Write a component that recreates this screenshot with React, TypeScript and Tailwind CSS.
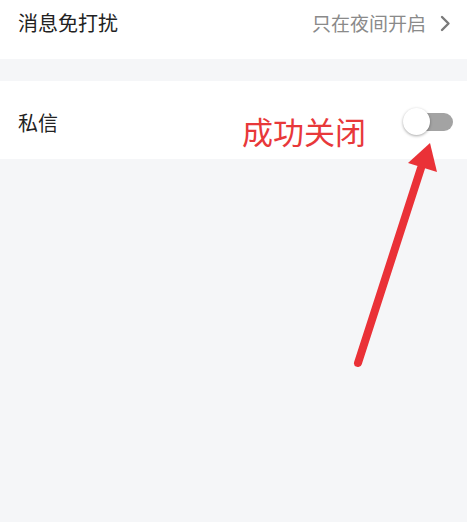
import React from "react";

function Toggle() {
    return (
        <div className="relative w-[52px] h-[28px] flex items-center">
            <div className="ml-[12px] w-[38px] h-[18px] rounded-full bg-[#a3a3a3]" />
            <div className="absolute left-0 top-0 w-[27px] h-[27px] rounded-full bg-white shadow-[0_1px_3px_rgba(0,0,0,0.35)]" />
        </div>
    );
}

export default function App() {
    return (
        <div
            className="relative w-[467px] h-[522px] bg-[#f5f6f8] overflow-hidden"
            style={{ fontFamily: '"Noto Sans CJK SC", "Noto Sans", sans-serif' }}
        >
            {/* 消息免打扰 */}
            <div className="h-[59px] bg-white flex items-center justify-between pl-[18px] pr-[16px] pb-[13px]">
                <span className="text-[20px] text-[#222]">消息免打扰</span>
                <div className="flex items-center gap-[14px]">
                    <span className="text-[19px] text-[#8a8a8a]">只在夜间开启</span>
                    <svg width="11" height="17" viewBox="0 0 11 17" fill="none">
                        <path d="M2 2 L8.5 8.5 L2 15" stroke="#7a7a7a" strokeWidth="2.4" strokeLinecap="round" strokeLinejoin="round" />
                    </svg>
                </div>
            </div>

            <div className="h-[22px]" />

            {/* 私信 */}
            <div className="h-[78px] bg-white flex items-center pl-[18px] pr-[12px]">
                <span className="text-[20px] text-[#222] mt-[5px]">私信</span>
                <span className="ml-auto mr-[37px] mt-[20px] text-[31px] leading-none text-[#e8383a]">成功关闭</span>
                <div className="mt-[3px]">
                    <Toggle />
                </div>
            </div>

            {/* annotation arrow */}
            <svg className="absolute left-0 top-0" width="467" height="522" viewBox="0 0 467 522">
                <line x1="358" y1="363" x2="421" y2="168" stroke="#ea3137" strokeWidth="8" strokeLinecap="round" />
                <polygon points="430,143 408,163 437,172" fill="#ea3137" />
            </svg>
        </div>
    );
}
